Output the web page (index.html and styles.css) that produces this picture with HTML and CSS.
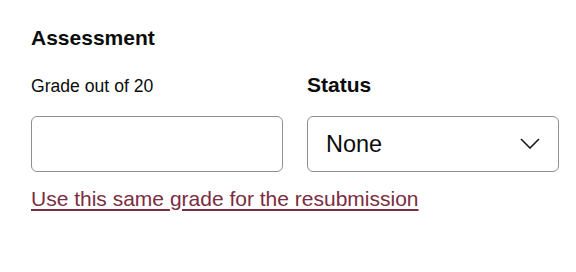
FILE: index.html
```html
<!DOCTYPE html>
<html lang="en">

<head>
    <meta charset="UTF-8">
    <meta name="viewport" content="width=device-width, initial-scale=1.0">
    <title>Assessment</title>
    <link rel="stylesheet" href="styles.css">
</head>

<body>
    <main class="assessment">
        <h2 class="assessment-title">Assessment</h2>

        <div class="assessment-grid">
            <label class="field-label" for="grade">Grade out of 20</label>
            <label class="field-label field-label-bold" for="status">Status</label>

            <input class="text-input" id="grade" type="text" />

            <div class="select-wrap">
                <select class="select-input" id="status">
                    <option>None</option>
                    <option>Pass</option>
                    <option>Fail</option>
                </select>
                <svg class="select-chevron" width="20" height="11" viewBox="0 0 20 11" aria-hidden="true">
                    <polyline points="1,1 10,10 19,1" fill="none" stroke="#1a1a1a" stroke-width="1.6" />
                </svg>
            </div>
        </div>

        <a class="resubmit-link" href="#">Use this same grade for the resubmission</a>
    </main>
</body>

</html>
```

FILE: styles.css
```css
html {
    box-sizing: border-box;
}

*,
*::before,
*::after {
    box-sizing: inherit;
    margin: 0;
    padding: 0;
}

:root {
    --text-color: #0b0c0c;
    --border-color: #8c8f94;
    --link-color: #7b2d41;
}

body {
    background-color: #fff;
    color: var(--text-color);
    font-family: 'Liberation Sans', Arial, sans-serif;
}

.assessment {
    padding: 25px 31px 0;
}

.assessment-title {
    font-size: 21px;
    line-height: 25px;
    font-weight: 700;
    margin-bottom: 22px;
}

.assessment-grid {
    display: grid;
    grid-template-columns: 252px 252px;
    column-gap: 24px;
    row-gap: 19px;
    align-items: end;
}

.field-label {
    font-size: 17.6px;
    line-height: 21px;
}

.field-label-bold {
    font-size: 21px;
    line-height: 25px;
    font-weight: 700;
}

.text-input,
.select-input {
    width: 100%;
    height: 56px;
    border: 1px solid var(--border-color);
    border-radius: 6px;
    background-color: #fff;
    font-family: inherit;
    color: var(--text-color);
}

.text-input {
    padding: 0 16px;
    font-size: 21px;
}

.select-wrap {
    position: relative;
}

.select-input {
    appearance: none;
    -webkit-appearance: none;
    padding: 0 50px 0 18px;
    font-size: 23.5px;
}

.select-chevron {
    position: absolute;
    right: 19px;
    top: 22px;
    pointer-events: none;
}

.resubmit-link {
    display: inline-block;
    margin-top: 14px;
    font-size: 21px;
    line-height: 25px;
    color: var(--link-color);
    text-decoration: underline;
    text-decoration-thickness: 2px;
    text-underline-offset: 3px;
}
```
